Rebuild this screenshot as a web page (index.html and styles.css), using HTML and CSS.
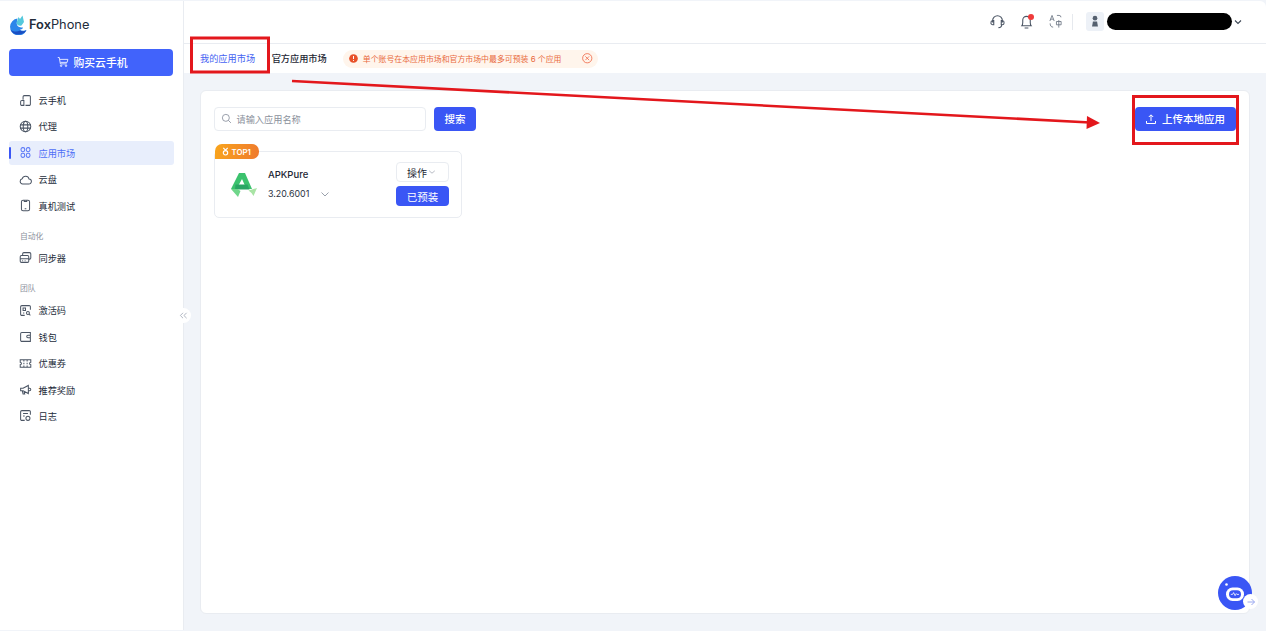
FILE: index.html
```html
<!DOCTYPE html>
<html lang="zh">
<head>
<meta charset="utf-8">
<title>FoxPhone</title>
<link rel="stylesheet" href="styles.css">
</head>
<body>
<div class="app">
  <aside class="sidebar">
    <div class="brand">
      <svg class="logo" viewBox="0 0 18 20"><path d="M8.500 3.500A8.500 8.500 0 1 0 17.500 15c-2.500 1.200-5 1-6.800-.3 1.800-.1 3-1 3.300-2.300-2.600.5-5.400-.5-6-2.600C7.500 8 8 6 8.500 3.500z" fill="#2c86ea"/><path d="M7.500 8 9.500 2l1.500 2L13.500 .5 15 7l-2.500 3.500C10.500 11 8 10.500 7.500 8z" fill="#55c8dc"/><path d="M1.500 14.500C4 17 8 17 11 15.500c1.500 1 4 1.200 6.500-.2C15.500 19 11 20 8 19.500c-3-.3-5.300-2.300-6.500-5z" fill="#1a4ec2"/></svg>
      <span class="brand-name"><b>Fox</b>Phone</span>
    </div>
    <button class="buy">
      <svg class="i12" viewBox="0 0 16 16" fill="none" stroke="#fff" stroke-width="1.100"><path d="M1 2h2l1.500 8.500h8.500M4 4.500h10.500l-1 4H4.700"/><circle cx="5.500" cy="13" r="1"/><circle cx="12" cy="13" r="1"/></svg>
      <span>购买云手机</span>
    </button>
    <nav class="nav">
      <a class="item"><svg class="ic" viewBox="0 0 16 16"><path d="M5 7V3.500A1.500 1.500 0 0 1 6.500 2h6A1.500 1.500 0 0 1 14 3.500v9a1.500 1.500 0 0 1-1.500 1.500H8M2 9.500a1.500 1.500 0 0 1 1.500-1.500H6v6H3.500A1.500 1.500 0 0 1 2 12.500z"/></svg>云手机</a>
      <a class="item"><svg class="ic" viewBox="0 0 16 16"><circle cx="8" cy="8" r="6.500"/><ellipse cx="8" cy="8" rx="2.800" ry="6.500"/><path d="M1.500 6h13M1.500 10h13"/></svg>代理</a>
      <a class="item active"><svg class="ic" viewBox="0 0 16 16"><rect x="2.500" y="2" width="4.500" height="5" rx="2"/><rect x="9" y="2" width="4.500" height="5" rx="2"/><rect x="2.500" y="9" width="4.500" height="5" rx="2"/><rect x="9" y="9" width="4.500" height="5" rx="2"/></svg>应用市场</a>
      <a class="item"><svg class="ic" viewBox="0 0 16 16"><path d="M4.500 13.500a3.300 3.300 0 0 1-.5-6.500 4.300 4.300 0 0 1 8.300.3 3.100 3.100 0 0 1-.3 6.200z"/></svg>云盘</a>
      <a class="item"><svg class="ic" viewBox="0 0 16 16"><rect x="3" y="1.500" width="10" height="13" rx="2"/><path d="M6.500 1.500v1.500h3V1.500M7 12h2"/></svg>真机测试</a>
      <div class="group">自动化</div>
      <a class="item"><svg class="ic" viewBox="0 0 16 16"><rect x="1.500" y="5.500" width="10.500" height="8.500" rx="1.500"/><path d="M4.500 5.500V3.500A1.500 1.500 0 0 1 6 2h7a1.500 1.500 0 0 1 1.500 1.500v5A1.500 1.500 0 0 1 13 10h-1M1.500 9.500h10.500M4 12h1M7 12h1"/></svg>同步器</a>
      <div class="group second">团队</div>
      <a class="item"><svg class="ic" viewBox="0 0 16 16"><path d="M7 14H3.500A1.500 1.500 0 0 1 2 12.500v-9A1.500 1.500 0 0 1 3.500 2h9A1.500 1.500 0 0 1 14 3.500V7M5 5h3v3H5z"/><circle cx="11" cy="11" r="1.800"/><path d="m12.300 12.300 1.700 1.700M5 11h1.500"/></svg>激活码</a>
      <a class="item"><svg class="ic" viewBox="0 0 16 16"><path d="M14 5V3H3.500A1.500 1.500 0 0 0 2 4.500v8A1.500 1.500 0 0 0 3.500 14H14zM14 6.500h-3a1.500 1.500 0 0 0 0 3h3"/></svg>钱包</a>
      <a class="item"><svg class="ic" viewBox="0 0 16 16"><path d="M1.500 3.500h13v3a1.500 1.500 0 0 0 0 3v3h-13v-3a1.500 1.500 0 0 0 0-3zM6 3.500v2M6 7v2M6 10.500v2M10 3.500v2M10 7v2M10 10.500v2"/></svg>优惠券</a>
      <a class="item"><svg class="ic" viewBox="0 0 16 16"><path d="M2 6.500h3L11.500 3v10L5 9.500H2zM11.500 6.500h1.500a1.500 1.500 0 0 1 0 3h-1.500M4 9.500l1 4h2l-1-3.500"/></svg>推荐奖励</a>
      <a class="item"><svg class="ic" viewBox="0 0 16 16"><path d="M7 14H3.500A1.500 1.500 0 0 1 2 12.500v-9A1.500 1.500 0 0 1 3.500 2h9A1.500 1.500 0 0 1 14 3.500V7M5 5.500h6M5 8.500h2"/><circle cx="11" cy="11.500" r="2.500"/></svg>日志</a>
    </nav>
    <button class="collapse"><svg viewBox="0 0 10 10" fill="none" stroke="#a8afbb" stroke-width="1"><path d="M4.500 2 1.500 5l3 3M8.500 2l-3 3 3 3"/></svg></button>
  </aside>

  <div class="content">
    <header class="topbar">
      <svg class="tb-ic" viewBox="0 0 16 16"><path d="M2.800 9V7a5.200 5.200 0 0 1 10.400 0v2M2.800 7H4v4.500H3A2 2 0 0 1 1 9.500 2.300 2.300 0 0 1 2.800 7zM13.200 7H12v4.500h1a2 2 0 0 0 2-2A2.300 2.300 0 0 0 13.200 7zM12.500 11.500c0 2-1.500 3-3.500 3"/></svg>
      <span class="bell">
        <svg class="tb-ic" viewBox="0 0 16 16"><path d="M3 12.500c.6-.8 1-2 1-3.500V6.500a4 4 0 0 1 8 0V9c0 1.500.4 2.700 1 3.500zM6 15h4"/></svg>
        <i class="dot"></i>
      </span>
      <svg class="tb-ic thin" viewBox="0 0 16 16"><path d="M2 7.500 4.300 1.500 6.600 7.500M2.800 5.500h3M9.500 1.500h2.300a2 2 0 0 1 2 2M2.300 10c0 2.500 1 4 3.200 4M9 8h5v3.500H9zM11.500 6.500v8"/></svg>
      <i class="sep"></i>
      <span class="avatar"><svg viewBox="0 0 12 14" fill="#55606f"><circle cx="6" cy="3.600" r="2.800"/><path d="M2.500 13.500 3.500 7.500h5l1 6z"/></svg></span>
      <span class="redact"></span>
      <svg class="caret" viewBox="0 0 10 10" fill="none" stroke="#3c4654" stroke-width="1.100"><path d="m2 3.500 3 3 3-3"/></svg>
    </header>
    <div class="tabs">
      <a class="tab on">我的应用市场</a>
      <a class="tab">官方应用市场</a>
      <div class="notice">
        <svg class="n-ic" viewBox="0 0 10 10"><circle cx="5" cy="5" r="4.800" fill="#e8512a"/><path d="M5 2.200v3.400M5 6.800v1" stroke="#fff" stroke-width="1.100"/></svg>
        <span>单个账号在本应用市场和官方市场中最多可预装 6 个应用</span>
        <svg class="n-close" viewBox="0 0 10 10" fill="none" stroke="#ef6a4a" stroke-width=".8"><circle cx="5" cy="5" r="4.400"/><path d="m3.200 3.200 3.600 3.600M6.800 3.200 3.200 6.800"/></svg>
      </div>
    </div>
    <main class="main">
      <section class="panel">
        <div class="toolbar">
          <div class="search">
            <svg class="s-ic" viewBox="0 0 12 12" fill="none" stroke="#8f96a3" stroke-width="1"><circle cx="5.300" cy="5.300" r="3.800"/><path d="m8 8 2.800 2.800"/></svg>
            <span>请输入应用名称</span>
          </div>
          <button class="btn-search">搜索</button>
          <button class="btn-upload">
            <svg class="i12" viewBox="0 0 12 12" fill="none" stroke="#fff" stroke-width="1"><path d="M1.500 8v2.500h9V8M6 8V2M3.800 4 6 1.800 8.200 4"/></svg>
            <span>上传本地应用</span>
          </button>
        </div>
        <article class="card">
          <div class="badge"><svg viewBox="0 0 8 10" fill="none" stroke="#fff" stroke-width="1.300"><circle cx="4" cy="6.500" r="2.500"/><path d="M1.500 .8 4 3.500 6.500 .8"/></svg>TOP1</div>
          <svg class="app-logo" viewBox="0 0 28 26">
            <path d="M9 1h6l7 16h-5.500L12 7 6.500 17H1z" fill="#3cc26e"/>
            <path d="M5.500 12.500h12l2 5H5z" fill="#2aa564"/>
            <path d="M1 17h6.500l3 2-2.500 6z" fill="#6fd68a"/>
            <path d="m18.500 18.500 8.500-2.500-3.500 8-2-3z" fill="#a9e4a5"/>
          </svg>
          <div class="app-info">
            <div class="app-name">APKPure</div>
            <div class="app-ver"><span>3.20.6001</span><svg viewBox="0 0 10 10" fill="none" stroke="#8f96a3" stroke-width=".9"><path d="m1.500 3.500 3.500 3.500 3.500-3.500"/></svg></div>
          </div>
          <div class="app-actions">
            <button class="btn-op">操作<svg viewBox="0 0 10 10" fill="none" stroke="#8f96a3" stroke-width=".8"><path d="m1.500 3.500 3.500 3 3.500-3"/></svg></button>
            <button class="btn-pre">已预装</button>
          </div>
        </article>
        <div class="bot">
          <svg viewBox="0 0 34 34"><circle cx="17" cy="17" r="17" fill="#3a56f5"/><rect x="8" y="11.500" width="18" height="13.500" rx="6.500" fill="#fff"/><rect x="11" y="14.300" width="12" height="8" rx="4" fill="#3a56f5"/><path d="M12.800 18.400h1.800l1-1.800 1.500 3 1.200-2 .7 .8h2" fill="none" stroke="#fff" stroke-width=".8"/><circle cx="8.500" cy="8.500" r="1.300" fill="#fff"/></svg>
          <span class="bot-arrow"><svg viewBox="0 0 10 10" fill="none" stroke="#9aa8f0" stroke-width="1"><path d="M1.500 5h7M5.500 2l3 3-3 3"/></svg></span>
        </div>
      </section>
    </main>
  </div>
</div>
<svg class="marks" viewBox="0 0 1266 631" fill="none">
  <rect x="191.500" y="38" width="77" height="34" stroke="#e3171c" stroke-width="3"/>
  <rect x="1133.500" y="96.500" width="104" height="47" stroke="#e3171c" stroke-width="3"/>
  <path d="M292 81 1090 122.500" stroke="#e3171c" stroke-width="2.600"/>
  <path d="m1087 116 13 7-13.500 6z" fill="#e3171c"/>
</svg>
</body>
</html>
```
FILE: styles.css
```css
* { box-sizing: border-box; }
html, body { margin: 0; height: 100%; overflow: hidden; }
body {
  font-family: Inter, "Noto Sans CJK SC", sans-serif;
  background: #f1f4f9;
  color: #1d2633;
  position: relative;
}
button { font-family: inherit; border: 0; cursor: pointer; }

.app { display: flex; width: 1266px; height: 631px; padding-top: 1px; padding-bottom: 1px; }

.sidebar {
  position: relative;
  width: 184px;
  flex: none;
  background: #fff;
  border-right: 1px solid #e9ecf1;
  padding: 0 9px;
}
.brand { display: flex; align-items: center; height: 47px; gap: 2px; }
.logo { width: 18px; height: 20px; margin-top: 1px; }
.brand-name { font-size: 12.800px; color: #232c3a; }
.brand-name b { font-weight: 600; }

.buy {
  width: 164px;
  height: 27px;
  margin-top: 1px;
  border-radius: 4px;
  background: #4163fb;
  color: #fff;
  font-size: 10.800px;
  font-weight: 500;
  display: flex;
  align-items: center;
  justify-content: center;
  gap: 5px;
  padding: 0 0 2px 2px;
}
.i12 { width: 12px; height: 12px; flex: none; }

.nav { margin-top: 12px; font-size: 9.200px; }
.item {
  position: relative;
  display: flex;
  align-items: center;
  gap: 6.500px;
  height: 24px;
  margin-bottom: 2.400px;
  padding-left: 10px;
  border-radius: 3px;
  color: #232c3a;
}
.ic { width: 13px; height: 13px; flex: none; fill: none; stroke: #4b5564; stroke-width: 1.250; }
.item.active { background: #e8eefc; color: #4f6ef7; }
.item.active .ic { stroke: #5b79f7; }
.item.active::before {
  content: "";
  position: absolute;
  left: -.5px;
  top: 6px;
  width: 2px;
  height: 12px;
  background: #3a56f5;
  border-radius: 1px;
}
.group { font-size: 7.800px; color: #8b919c; padding: 11px 0 0 11px; height: 26px; line-height: 10px; }
.group.second { margin-top: 2px; }

.collapse {
  position: absolute;
  right: -8px;
  top: 307px;
  width: 15px;
  height: 15px;
  padding: 3px;
  border-radius: 50%;
  background: #fff;
  display: flex;
}
.collapse svg { width: 9px; height: 9px; }

.content { flex: 1; min-width: 0; display: flex; flex-direction: column; }

.topbar {
  height: 43px;
  flex: none;
  background: #fff;
  border-bottom: 1px solid #e9ecf1;
  border-top-right-radius: 6px;
  display: flex;
  align-items: center;
  justify-content: flex-end;
  padding-right: 23px;
}
.tb-ic { width: 15px; height: 15px; margin-bottom: 1px; fill: none; stroke: #4b5564; stroke-width: 1.150; flex: none; display: block; }
.tb-ic.thin { stroke: #6b7482; stroke-width: .9; }
.topbar > .tb-ic:first-child { margin-right: -1px; }
.bell { position: relative; margin-left: 15px; margin-right: 14px; }
.dot {
  position: absolute;
  top: 0;
  right: 0;
  width: 6px;
  height: 6px;
  border-radius: 50%;
  background: #ef3b3b;
}
.sep { width: 1px; height: 16px; background: #e6e9ee; margin: 0 13px 0 9px; }
.avatar {
  width: 18px;
  height: 19px;
  margin-bottom: 1px;
  border-radius: 3px;
  background: #edf1f7;
  padding: 3px;
  display: flex;
  justify-content: center;
}
.avatar svg { width: 10px; height: 12px; }
.redact { width: 125px; height: 17px; margin-bottom: 1px; background: #000; border-radius: 8.500px; margin-left: 3px; }
.caret { width: 10px; height: 10px; margin-left: 1px; }

.tabs {
  height: 29px;
  flex: none;
  background: #fff;
  display: flex;
  align-items: center;
  font-size: 9.200px;
  padding-left: 16px;
}
.tab { color: #1d2633; font-weight: 500; margin-right: 16.500px; padding-bottom: 2px; }
.tab.on { color: #4663f2; font-weight: 400; }
.notice {
  display: flex;
  align-items: center;
  height: 18px;
  padding: 0 5px 0 6px;
  background: #fff5ec;
  border-radius: 9px;
  color: #e96a3c;
  font-size: 7.900px;
}
.n-ic { width: 9px; height: 9px; margin-right: 4.500px; }
.n-close { width: 10.500px; height: 10.500px; margin-left: 21px; }

.main { flex: 1; min-height: 0; padding: 17px 16px 16px 16px; }
.panel {
  position: relative;
  height: 100%;
  background: #fff;
  border: 1px solid #e9ecf1;
  border-radius: 6px;
  padding: 15px 12px 0 13px;
}

.toolbar { display: flex; align-items: center; gap: 8px; height: 25px; }
.search {
  width: 212px;
  height: 24px;
  border: 1px solid #e9ecf1;
  border-radius: 4px;
  display: flex;
  align-items: center;
  padding-left: 5.500px;
  gap: 5px;
  font-size: 9.200px;
  color: #8b919c;
}
.s-ic { width: 11px; height: 11px; }
.btn-search {
  width: 42px;
  height: 24px;
  background: #3a56f5;
  color: #fff;
  font-size: 10.500px;
  font-weight: 500;
  border-radius: 4px;
  padding: 0;
}
.btn-upload {
  margin-left: auto;
  margin-right: 1px;
  width: 101px;
  height: 24px;
  background: #3a56f5;
  color: #fff;
  font-size: 10.500px;
  font-weight: 500;
  border-radius: 4px;
  display: flex;
  align-items: center;
  justify-content: center;
  gap: 5px;
  padding: 0 1px 0 0;
}

.card {
  position: relative;
  width: 248px;
  height: 67px;
  margin-top: 20px;
  border: 1px solid #e9ecf1;
  border-radius: 5px;
  display: flex;
  align-items: center;
}
.badge {
  position: absolute;
  left: 0;
  top: -8px;
  width: 44px;
  height: 15px;
  border-radius: 7px 7px 7px 0;
  background: linear-gradient(100deg, #f9a51c, #ef7a2e);
  color: #fff;
  font-size: 7.800px;
  font-weight: 600;
  display: flex;
  align-items: center;
  gap: 3px;
  padding-left: 6.500px;
}
.badge svg { width: 7px; height: 9px; }
.app-logo { width: 28px; height: 26px; margin-left: 15px; flex: none; }
.app-info { margin-left: 10px; }
.app-name { font-size: 9.500px; font-weight: 500; color: #1d2633; line-height: 12px; }
.app-ver { display: flex; align-items: center; font-size: 8.900px; margin-top: 7px; line-height: 12px; color: #2a3342; }
.app-ver svg { width: 10px; height: 10px; margin-left: 11px; }
.app-actions { margin: 0 12px 1px auto; display: flex; flex-direction: column; gap: 4px; }
.btn-op {
  width: 53px;
  height: 20px;
  background: #fff;
  border: 1px solid #e9ecf1;
  border-radius: 4px;
  color: #1d2633;
  font-size: 10px;
  display: flex;
  align-items: center;
  justify-content: center;
  gap: 1px;
  padding: 0 2px 0 0;
}
.btn-op svg { width: 8px; height: 8px; }
.btn-pre {
  width: 53px;
  height: 20px;
  background: #3a56f5;
  color: #fff;
  font-size: 10.500px;
  border-radius: 4px;
  padding: 0;
}

.bot { position: absolute; right: -3px; bottom: 3px; width: 34px; height: 34px; }
.bot > svg { display: block; width: 34px; height: 34px; }
.bot-arrow {
  position: absolute;
  right: -6px;
  bottom: 1px;
  width: 15px;
  height: 15px;
  border-radius: 50%;
  background: #fff;
  padding: 2.500px;
  display: flex;
}
.bot-arrow svg { width: 10px; height: 10px; }

.marks { position: absolute; left: 0; top: 0; width: 1266px; height: 631px; pointer-events: none; }
```
